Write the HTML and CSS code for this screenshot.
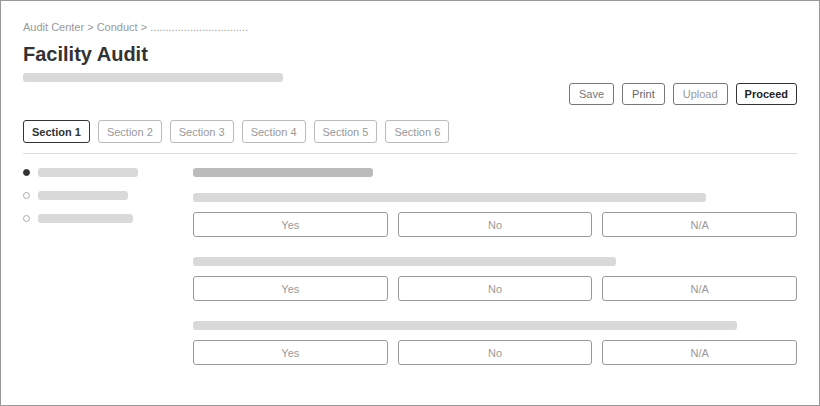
FILE: index.html
```html
<!DOCTYPE html>
<html lang="en">
<head>
<meta charset="utf-8">
<title>Facility Audit</title>
<link rel="stylesheet" href="styles.css">
</head>
<body>
<div class="page">
  <div class="breadcrumb">Audit Center &gt; Conduct &gt; ................................</div>
  <h1 class="title">Facility Audit</h1>
  <div class="skel subtitle"></div>
  <div class="actions">
    <button class="btn save">Save</button>
    <button class="btn print">Print</button>
    <button class="btn upload">Upload</button>
    <button class="btn primary">Proceed</button>
  </div>
  <div class="tabs">
    <button class="tab active">Section 1</button>
    <button class="tab">Section 2</button>
    <button class="tab">Section 3</button>
    <button class="tab">Section 4</button>
    <button class="tab">Section 5</button>
    <button class="tab">Section 6</button>
  </div>
  <div class="content">
    <ul class="nav">
      <li class="nav-item current"><span class="dot"></span><span class="skel nav-bar" style="width:100px"></span></li>
      <li class="nav-item"><span class="dot"></span><span class="skel nav-bar" style="width:90px"></span></li>
      <li class="nav-item"><span class="dot"></span><span class="skel nav-bar" style="width:95px"></span></li>
    </ul>
    <div class="main">
      <div class="skel heading"></div>
      <div class="question first">
        <div class="skel q-bar" style="width:85%"></div>
        <div class="answers">
          <button class="answer">Yes</button>
          <button class="answer">No</button>
          <button class="answer">N/A</button>
        </div>
      </div>
      <div class="question">
        <div class="skel q-bar" style="width:70%"></div>
        <div class="answers">
          <button class="answer">Yes</button>
          <button class="answer">No</button>
          <button class="answer">N/A</button>
        </div>
      </div>
      <div class="question">
        <div class="skel q-bar" style="width:90%"></div>
        <div class="answers">
          <button class="answer">Yes</button>
          <button class="answer">No</button>
          <button class="answer">N/A</button>
        </div>
      </div>
    </div>
  </div>
</div>
</body>
</html>
```
FILE: styles.css
```css
* { box-sizing: border-box; }
html, body { margin: 0; padding: 0; background: #fff; }
body { font-family: "Liberation Sans", Arial, sans-serif; color: #333; }

.page {
  width: 820px;
  height: 406px;
  border: 1px solid #999;
  padding: 19px 22px 0;
  overflow: hidden;
}

.breadcrumb {
  font-size: 11px;
  line-height: 14px;
  color: #999;
}

.title {
  margin: 8px 0 0;
  font-size: 20px;
  line-height: 24px;
  font-weight: bold;
  color: #333;
}

.skel {
  display: block;
  background: #d9d9d9;
  border-radius: 3px;
}

.subtitle {
  margin-top: 7px;
  width: 260px;
  height: 9px;
}

.actions {
  display: flex;
  justify-content: flex-end;
  gap: 8px;
  margin-top: 1px;
}

.btn, .tab, .answer {
  font-family: "Liberation Sans", Arial, sans-serif;
  font-size: 11px;
  background: #fff;
  margin: 0;
  cursor: pointer;
}

.btn {
  height: 22px;
  padding: 0 9px;
  border: 1px solid #777;
  border-radius: 3px;
  color: #777;
}

.btn.print { color: #666; }
.btn.upload { color: #999; }

.btn.primary {
  padding: 0 8px;
  border-color: #333;
  color: #222;
  font-weight: bold;
}

.tabs {
  display: flex;
  gap: 8px;
  margin-top: 15px;
  padding-bottom: 10px;
  border-bottom: 1px solid #ddd;
}

.tab {
  height: 23px;
  padding: 0 8px;
  border: 1px solid #bbb;
  border-radius: 3px;
  color: #999;
}

.tab.active {
  border-color: #333;
  color: #333;
  font-weight: bold;
}

.content {
  display: grid;
  grid-template-columns: 170px 1fr;
  margin-top: 14px;
}

.nav {
  list-style: none;
  margin: 0;
  padding: 0;
  display: flex;
  flex-direction: column;
  gap: 14px;
}

.nav-item {
  display: flex;
  align-items: center;
  height: 9px;
}

.dot {
  width: 7px;
  height: 7px;
  border-radius: 50%;
  border: 1px solid #aaa;
  margin: 0 8px 0 0;
  flex: none;
}

.nav-item.current .dot {
  background: #333;
  border-color: #333;
}

.nav-bar {
  height: 9px;
}

.main {
  display: flex;
  flex-direction: column;
}

.heading {
  width: 180px;
  height: 9px;
  background: #bbb;
}

.question {
  margin-top: 20px;
}

.question.first {
  margin-top: 16px;
}

.q-bar {
  height: 9px;
}

.answers {
  display: grid;
  grid-template-columns: 1fr 1fr 1fr;
  gap: 10px;
  margin-top: 10px;
}

.answer {
  height: 25px;
  border: 1px solid #999;
  border-radius: 3px;
  color: #999;
  padding: 0;
}
```
